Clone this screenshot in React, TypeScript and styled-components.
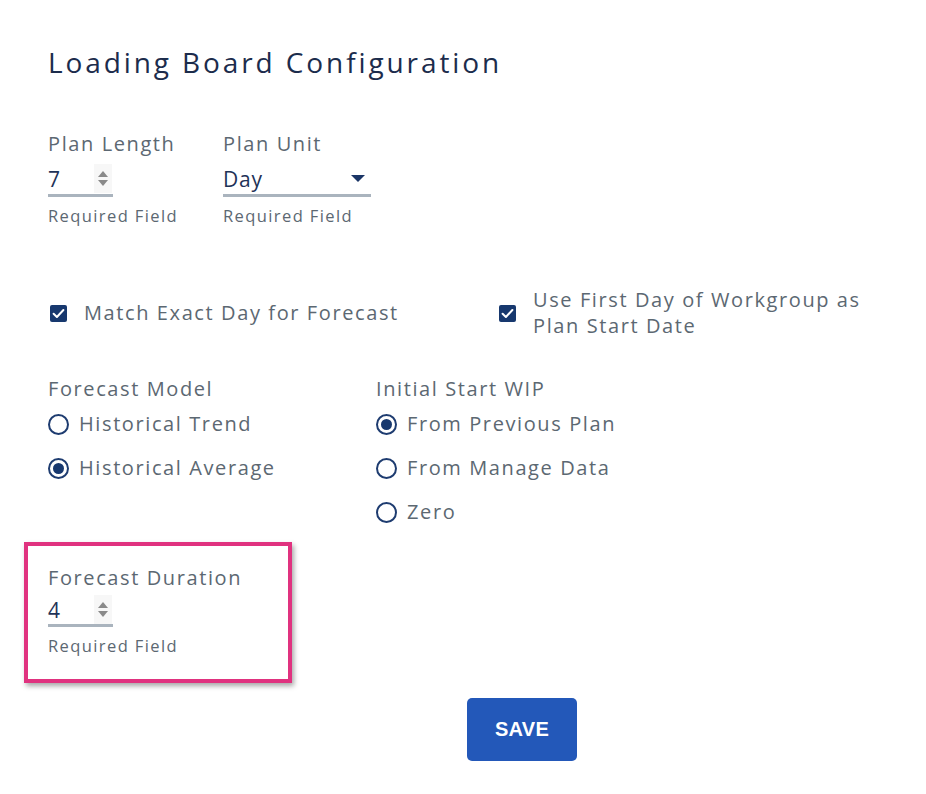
import React, { useState } from "react";
import styled, { createGlobalStyle } from "styled-components";

const GlobalStyle = createGlobalStyle`
  html, body {
    margin: 0;
    padding: 0;
    background: #ffffff;
    font-family: "Open Sans", "Noto Sans", sans-serif;
    overflow: hidden;
  }
`;

// ============== STYLED COMPONENTS ==============

const Page = styled.div`
  width: 926px;
  height: 794px;
  box-sizing: border-box;
  padding: 44px 0 0 48px;
  background: #ffffff;
`;

const Title = styled.h1`
  margin: 0;
  font-size: 28px;
  line-height: 36px;
  font-weight: 400;
  letter-spacing: 2.9px;
  color: #1c2c4c;
`;

const FieldsRow = styled.div`
  display: flex;
  gap: 44px;
  margin-top: 52px;
`;

const Field = styled.div<{ $width: number }>`
  display: flex;
  flex-direction: column;
  width: ${(p) => p.$width}px;
`;

const Label = styled.div`
  font-size: 20px;
  line-height: 24px;
  letter-spacing: 1.6px;
  color: #5c6872;
  white-space: nowrap;
`;

const InputLine = styled.div<{ $width: number; $compact?: boolean }>`
  display: flex;
  align-items: center;
  justify-content: space-between;
  width: ${(p) => p.$width}px;
  height: ${(p) => (p.$compact ? 29 : 31)}px;
  margin-top: ${(p) => (p.$compact ? 5 : 7)}px;
  border-bottom: 3px solid #aab4be;
  box-sizing: content-box;
`;

const Value = styled.span`
  font-size: 21px;
  line-height: 28px;
  color: #1f3358;
  letter-spacing: 0.8px;
`;

const Spinner = styled.div`
  display: flex;
  flex-direction: column;
  align-items: center;
  justify-content: center;
  gap: 3px;
  width: 18px;
  height: 29px;
  margin-right: 1px;
  background: #f7f7f7;
`;

const Arrow = styled.div<{ $up?: boolean }>`
  width: 0;
  height: 0;
  border-left: 5px solid transparent;
  border-right: 5px solid transparent;
  ${(p) =>
    p.$up
      ? "border-bottom: 6px solid #8a8a8a;"
      : "border-top: 6px solid #8a8a8a;"}
`;

const Caret = styled.div`
  width: 0;
  height: 0;
  margin-right: 6px;
  border-left: 7px solid transparent;
  border-right: 7px solid transparent;
  border-top: 7px solid #1a3566;
`;

const Hint = styled.div`
  margin-top: 8px;
  font-size: 16.5px;
  line-height: 22px;
  letter-spacing: 1.4px;
  color: #5c6872;
  white-space: nowrap;
`;

const CheckRow = styled.div`
  display: flex;
  align-items: center;
  margin-top: 60px;
`;

const CheckItem = styled.label<{ $width: number }>`
  display: flex;
  align-items: center;
  width: ${(p) => p.$width}px;
  cursor: pointer;
`;

const CheckBox = styled.span`
  display: flex;
  align-items: center;
  justify-content: center;
  flex: none;
  width: 17px;
  height: 17px;
  margin: 0 17px 0 2px;
  border-radius: 2px;
  background: #17386e;
`;

const CheckText = styled.span`
  font-size: 20px;
  line-height: 26px;
  letter-spacing: 1.6px;
  color: #5c6872;
`;

const GroupsRow = styled.div`
  display: flex;
  margin-top: 38px;
`;

const Group = styled.div<{ $width: number }>`
  display: flex;
  flex-direction: column;
  width: ${(p) => p.$width}px;
`;

const RadioItem = styled.label`
  display: flex;
  align-items: center;
  height: 44px;
  cursor: pointer;
  &:first-of-type {
    margin-top: 1px;
  }
`;

const RadioCircle = styled.span<{ $checked: boolean }>`
  display: flex;
  align-items: center;
  justify-content: center;
  flex: none;
  box-sizing: border-box;
  width: 21px;
  height: 21px;
  margin-right: 10px;
  border-radius: 50%;
  border: 2px solid #1e3c70;

  &::after {
    content: "";
    width: 11px;
    height: 11px;
    border-radius: 50%;
    background: ${(p) => (p.$checked ? "#17386e" : "transparent")};
  }
`;

const RadioText = styled.span`
  font-size: 20px;
  line-height: 26px;
  letter-spacing: 1.6px;
  color: #5c6872;
`;

const Highlight = styled.div`
  width: 268px;
  height: 141px;
  box-sizing: border-box;
  margin: 8px 0 0 -24px;
  padding: 20px 0 0 20px;
  border: 4px solid #e0327f;
  box-shadow: 2px 3px 5px rgba(0, 0, 0, 0.35);
`;

const ButtonRow = styled.div`
  display: flex;
  padding-left: 419px;
  margin-top: 15px;
`;

const SaveButton = styled.button`
  width: 110px;
  height: 63px;
  border: none;
  border-radius: 5px;
  background: #2358b9;
  color: #ffffff;
  font-family: "Liberation Sans", Arial, sans-serif;
  font-weight: 700;
  font-size: 20px;
  letter-spacing: 0.3px;
  cursor: pointer;
`;

// ============== COMPONENTS ==============

const CheckIcon = () => (
  <svg width="13" height="11" viewBox="0 0 13 11">
    <path
      d="M1.6 5.8 L4.9 9 L11.4 2"
      fill="none"
      stroke="#ffffff"
      strokeWidth="2"
      strokeLinecap="round"
      strokeLinejoin="round"
    />
  </svg>
);

const NumberField = ({
  label,
  value,
  compact,
}: {
  label: string;
  value: string;
  compact?: boolean;
}) => (
  <Field $width={131}>
    <Label>{label}</Label>
    <InputLine $width={65} $compact={compact}>
      <Value>{value}</Value>
      <Spinner>
        <Arrow $up />
        <Arrow />
      </Spinner>
    </InputLine>
    <Hint>Required Field</Hint>
  </Field>
);

const forecastModels = ["Historical Trend", "Historical Average"];
const startWip = ["From Previous Plan", "From Manage Data", "Zero"];

export default function App() {
  const [model, setModel] = useState("Historical Average");
  const [wip, setWip] = useState("From Previous Plan");

  return (
    <>
      <GlobalStyle />
      <Page>
        <Title>Loading Board Configuration</Title>

        <FieldsRow>
          <NumberField label="Plan Length" value="7" />
          <Field $width={148}>
            <Label>Plan Unit</Label>
            <InputLine $width={148}>
              <Value>Day</Value>
              <Caret />
            </InputLine>
            <Hint>Required Field</Hint>
          </Field>
        </FieldsRow>

        <CheckRow>
          <CheckItem $width={449}>
            <CheckBox>
              <CheckIcon />
            </CheckBox>
            <CheckText>Match Exact Day for Forecast</CheckText>
          </CheckItem>
          <CheckItem $width={380}>
            <CheckBox>
              <CheckIcon />
            </CheckBox>
            <CheckText>
              Use First Day of Workgroup as
              <br />
              Plan Start Date
            </CheckText>
          </CheckItem>
        </CheckRow>

        <GroupsRow>
          <Group $width={328}>
            <Label>Forecast Model</Label>
            {forecastModels.map((m) => (
              <RadioItem key={m} onClick={() => setModel(m)}>
                <RadioCircle $checked={model === m} />
                <RadioText>{m}</RadioText>
              </RadioItem>
            ))}
          </Group>
          <Group $width={300}>
            <Label>Initial Start WIP</Label>
            {startWip.map((w) => (
              <RadioItem key={w} onClick={() => setWip(w)}>
                <RadioCircle $checked={wip === w} />
                <RadioText>{w}</RadioText>
              </RadioItem>
            ))}
          </Group>
        </GroupsRow>

        <Highlight>
          <NumberField label="Forecast Duration" value="4" compact />
        </Highlight>

        <ButtonRow>
          <SaveButton>SAVE</SaveButton>
        </ButtonRow>
      </Page>
    </>
  );
}
